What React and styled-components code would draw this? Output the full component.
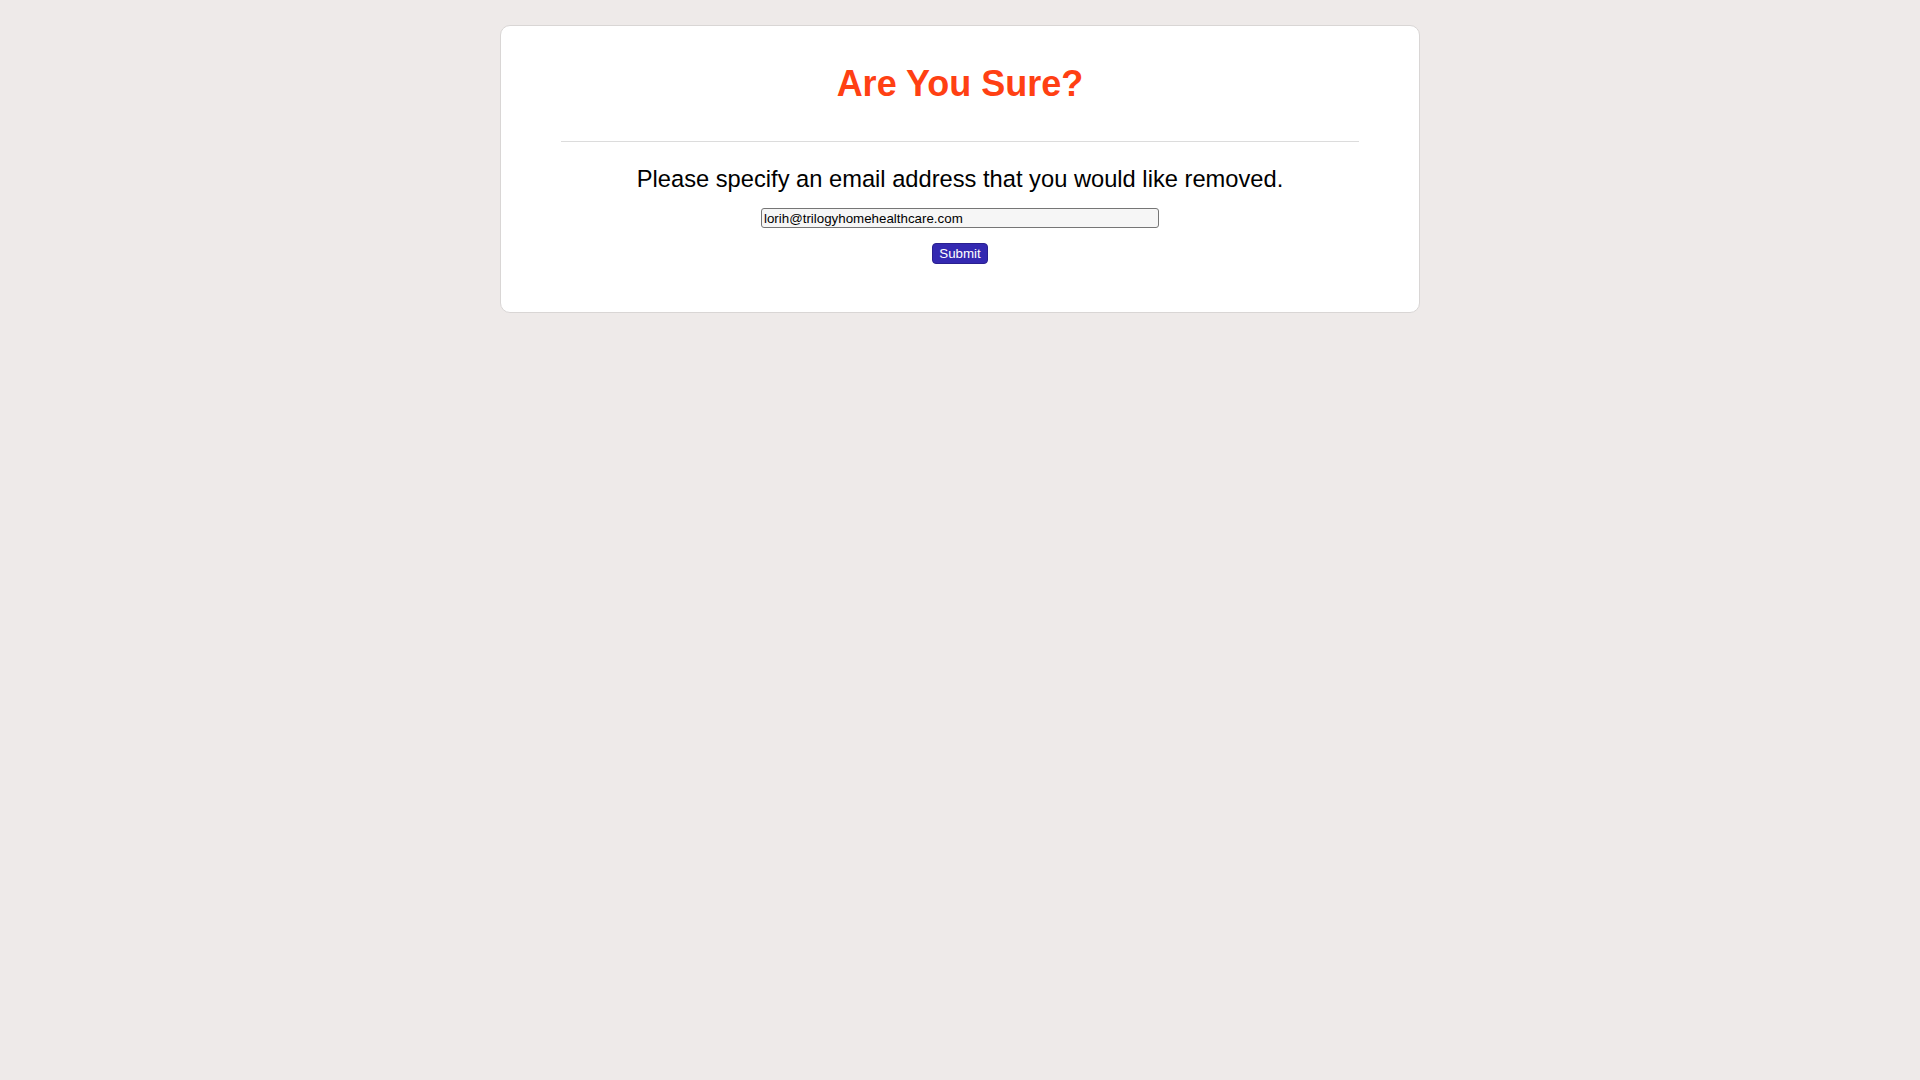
import React from 'react'
import styled, { createGlobalStyle } from 'styled-components'

const Global = createGlobalStyle`
  html, body {
    margin: 0;
    padding: 0;
    background: #eeeae9;
    font-family: "Liberation Sans", Arial, sans-serif;
  }
`;

const Page = styled.div`
  display: flex;
  justify-content: center;
  padding-top: 25px;
`;

const Card = styled.div`
  width: 920px;
  box-sizing: border-box;
  background: #fff;
  border: 1px solid #d9d6d5;
  border-radius: 10px;
  padding: 40px 60px 48px;
  display: flex;
  flex-direction: column;
  align-items: center;
`;

const Title = styled.h1`
  margin: 0;
  font-size: 36px;
  line-height: 36px;
  font-weight: bold;
  color: #ff4013;
`;

const Rule = styled.hr`
  align-self: stretch;
  border: 0;
  border-top: 1px solid #dcdcdc;
  margin: 39px 0 0;
`;

const Prompt = styled.p`
  margin: 24px 0 0;
  font-size: 23.7px;
  line-height: 27px;
  color: #000;
`;

const Form = styled.form`
  display: flex;
  flex-direction: column;
  align-items: center;
  gap: 15px;
  margin-top: 15px;
`;

const EmailInput = styled.input`
  width: 398px;
  height: 20px;
  box-sizing: border-box;
  padding: 0 3px 0 2px;
  font-family: "Liberation Sans", Arial, sans-serif;
  font-size: 13.33px;
  color: #000;
  background: #f6f6f6;
  border: 1px solid #767676;
  border-radius: 3px;
  outline: none;
`;

const SubmitButton = styled.button`
  width: 56px;
  height: 21px;
  padding: 0;
  font-family: "Liberation Sans", Arial, sans-serif;
  font-size: 13.33px;
  color: #fff;
  background: #3429b1;
  border: 1px solid #2a2090;
  border-radius: 4px;
  cursor: pointer;
`;

export default function App() {
  return (
    <>
      <Global />
      <Page>
        <Card>
          <Title>Are You Sure?</Title>
          <Rule />
          <Prompt>Please specify an email address that you would like removed.</Prompt>
          <Form onSubmit={e => e.preventDefault()}>
            <EmailInput type="text" defaultValue="lorih@trilogyhomehealthcare.com" />
            <SubmitButton type="submit">Submit</SubmitButton>
          </Form>
        </Card>
      </Page>
    </>
  )
}
